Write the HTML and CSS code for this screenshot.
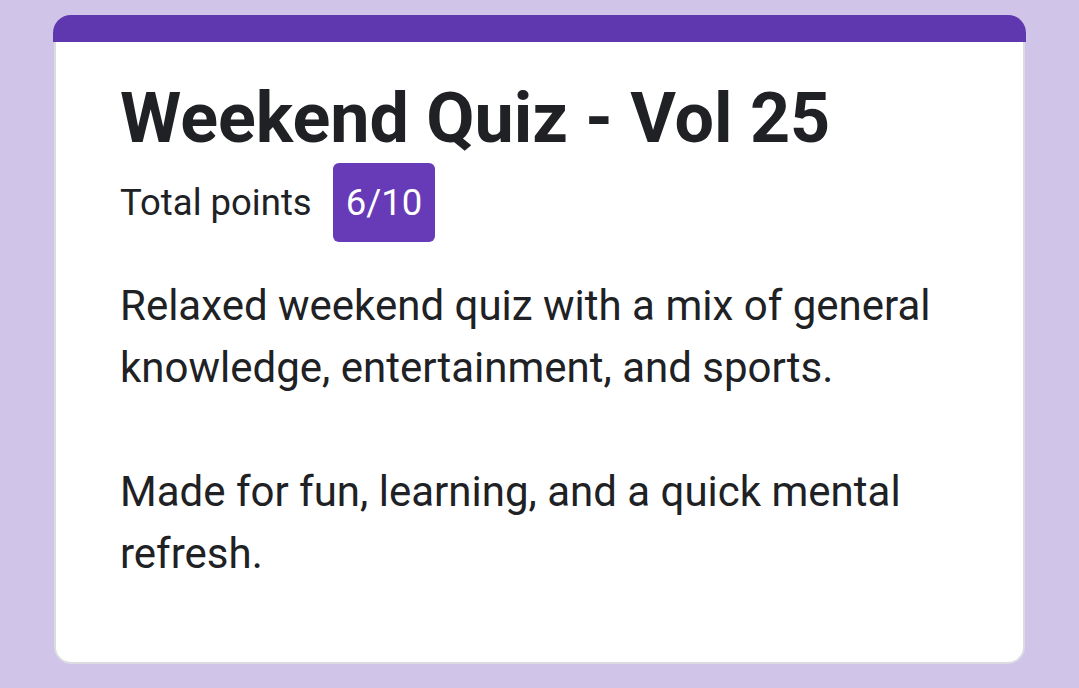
FILE: index.html
```html
<!DOCTYPE html>
<html>
<head>
    <title>Weekend Quiz - Vol 25</title>
    <link rel="stylesheet" href="styles.css">
</head>
<body>
    <div class="quiz-card">
        <div class="quiz-accent"></div>
        <div class="quiz-header">
            <h1 class="quiz-title">Weekend Quiz - Vol 25</h1>
            <div class="quiz-score">
                <span class="score-label">Total points</span>
                <span class="score-badge">6/10</span>
            </div>
            <p class="quiz-description">Relaxed weekend quiz with a mix of general knowledge, entertainment, and sports.

Made for fun, learning, and a quick mental refresh.</p>
        </div>
    </div>
</body>
</html>
```

FILE: styles.css
```css
body {
    margin: 0;
    padding: 15px 53px 0;
    background: #d1c4e9;
    font-family: Roboto, 'Noto Sans', Arial, sans-serif;
    color: #202124;
}
.quiz-card {
    width: 973px;
    border-radius: 18px;
    overflow: hidden;
}
.quiz-accent {
    height: 27px;
    background: #5f37ae;
}
.quiz-header {
    background: #fff;
    margin: 0 1px;
    border: 2px solid #dadce0;
    border-top: none;
    border-radius: 0 0 17px 17px;
    padding: 34px 64px 77px;
}
.quiz-title {
    margin: 0;
    font-size: 70px;
    font-weight: 700;
    line-height: 1.2;
}
.quiz-score {
    display: flex;
    align-items: center;
    gap: 21px;
    margin-top: 3px;
}
.score-label {
    font-size: 36.5px;
}
.score-badge {
    background: #673ab7;
    color: #fff;
    font-size: 36.5px;
    padding: 18px 13px;
    line-height: 43px;
    border-radius: 6px;
}
.quiz-description {
    margin: 33px 0 0;
    font-size: 42px;
    line-height: 62px;
    white-space: pre-line;
}
```
